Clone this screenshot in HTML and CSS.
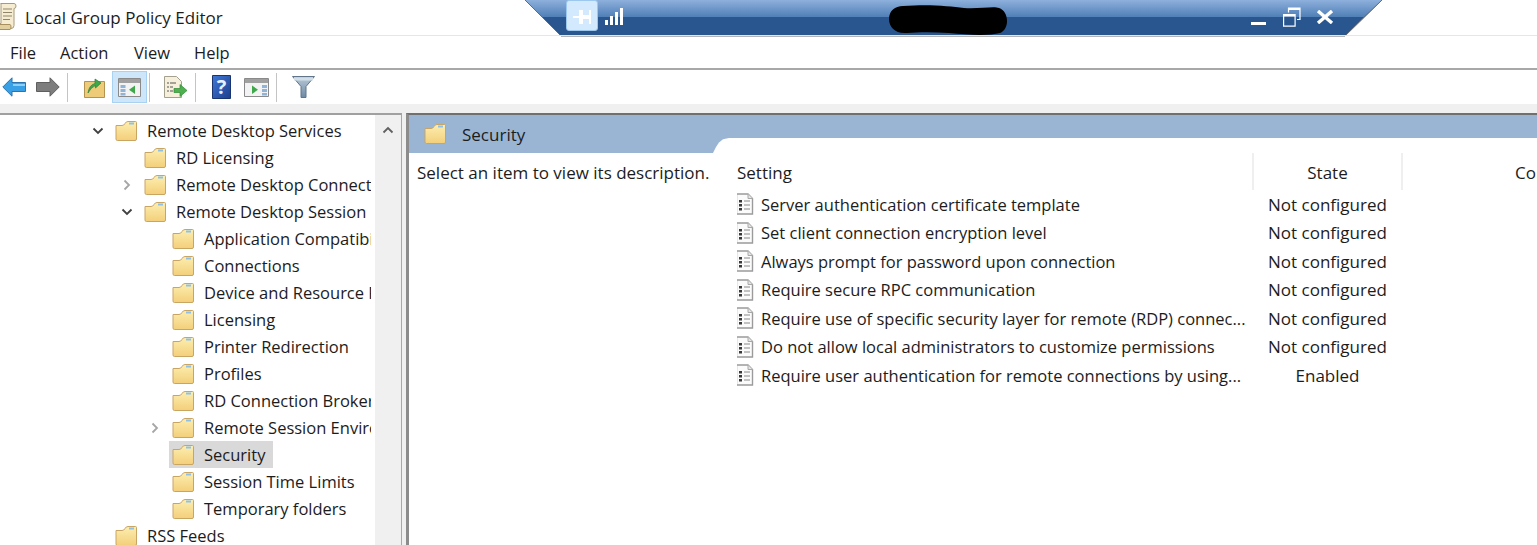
FILE: index.html
```html
<!DOCTYPE html>
<html lang="en">
<head>
    <meta charset="UTF-8">
    <title>Local Group Policy Editor</title>
    <link rel="stylesheet" href="styles.css">
</head>
<body>
    <svg class="defs" width="0" height="0">
        <defs>
            <linearGradient id="folder-fill" x1="0" y1="0" x2="0" y2="1">
                <stop offset="0" stop-color="#fdeeb0"/>
                <stop offset="1" stop-color="#f3cf7a"/>
            </linearGradient>
            <linearGradient id="bar-fill" x1="0" y1="0" x2="0" y2="1">
                <stop offset="0" stop-color="#8eb0dc"/>
                <stop offset="1" stop-color="#4f7fb6"/>
            </linearGradient>
            <linearGradient id="help-fill" x1="0" y1="0" x2="1" y2="1">
                <stop offset="0" stop-color="#3f78d8"/>
                <stop offset="1" stop-color="#1d3f8c"/>
            </linearGradient>
            <linearGradient id="filter-fill" x1="0" y1="0" x2="0" y2="1">
                <stop offset="0" stop-color="#b9cad9"/>
                <stop offset="1" stop-color="#6f8aa3"/>
            </linearGradient>
            <symbol id="folder" viewBox="0 0 22 20">
                <path d="M1 4.500 L1 18 Q1 19.500 2.500 19.500 L20 19.500 Q21.500 19.500 21.500 18 L21.500 1.500 Q21.500 .5 20.500 .5 L13 .5 Q11 .5 10 2.500 Q9 4.500 7 4.500Z" fill="url(#folder-fill)" stroke="#c9a564" stroke-width="1"/>
                <path d="M14 1.500h5v2h-5z" fill="#8fc0e8"/>
            </symbol>
            <symbol id="doc" viewBox="0 0 19 22">
                <path d="M1.500 1h11.500l4.500 4.500v15.500h-16z" fill="#fbfbfb" stroke="#9b9b9b" stroke-width="1.400"/>
                <path d="M13 1v4.500h4.500" fill="#e4e4e4" stroke="#a8a8a8"/>
                <path d="M4 7h3v2.500h-3zM4 11h3v2.500h-3zM4 15h3v2.500h-3z" fill="#3a3a3a"/>
                <path d="M9 8h6M9 12h6M9 16h6" stroke="#8a8a8a" fill="none"/>
            </symbol>
            <symbol id="chev-down" viewBox="0 0 12 8">
                <path d="M1.500 1.500 L6 6 L10.500 1.500" fill="none" stroke="#404040" stroke-width="1.800"/>
            </symbol>
            <symbol id="chev-right" viewBox="0 0 8 12">
                <path d="M1.500 1.500 L6 6 L1.500 10.500" fill="none" stroke="#a6a6a6" stroke-width="1.800"/>
            </symbol>
        </defs>
    </svg>

    <!-- remote desktop connection bar -->
    <div class="rdp-bar">
        <svg class="rdp-shape" width="860" height="38" viewBox="0 0 860 38">
            <path d="M1 0 L37 36 L821 36 L858 0Z" fill="#29568f"/>
            <path d="M1 0 L18 17 L840 17 L858 0Z" fill="url(#bar-fill)"/>
            <path d="M1 0 L37 36 L821 36 L858 0" fill="none" stroke="#6b6b6b" stroke-width="1"/>
        </svg>
        <div class="rdp-pin">
            <svg width="18" height="14" viewBox="0 0 18 14"><path d="M0 6h6v2h-6zM6 0h4v14h-4zM10 5h6v4h-6zM16 0h2v14h-2z" fill="#fff"/></svg>
        </div>
        <svg class="rdp-signal" width="18" height="17" viewBox="0 0 18 17"><path d="M0 12h3v5h-3zM5 8h3v9h-3zM10 4h3v13h-3zM15 0h3v17h-3z" fill="#fff"/></svg>
        <svg class="rdp-blob" width="120" height="30" viewBox="0 0 120 30"><path d="M14 1 C40 -1 60 1 75 3 C90 4 105 1 110 3 C120 6 121 24 111 28 C100 31 80 30 60 28 C45 27 30 27 18 28 C6 29 0 22 0 14 C0 6 6 1 14 1Z" fill="#000"/></svg>
        <div class="rdp-min"></div>
        <svg class="rdp-restore" width="18" height="20" viewBox="0 0 18 20"><path d="M5.500 5.500v-4.500h11.500v11.500h-3" fill="none" stroke="#fff" stroke-width="1.200"/><path d="M5 2h12" stroke="#fff" stroke-width="2"/><path d="M.6 7.600h11.500v11.500h-11.500z" fill="none" stroke="#fff" stroke-width="1.200"/><path d="M1 8.500h11" stroke="#fff" stroke-width="2"/></svg>
        <svg class="rdp-close" width="18" height="14" viewBox="0 0 18 14"><path d="M2 1 L16 13 M16 1 L2 13" stroke="#fff" stroke-width="3.400"/></svg>
    </div>

    <div class="titlebar">
        <svg class="title-icon" width="17" height="28" viewBox="0 0 17 28">
            <path d="M1 1.500h13q2 0 2 2.500t-2 2.500v17q0 3 -3 3h-11v-5h1v-18q0 -2 0 -2.500z" fill="#f5ecd2" stroke="#a99a78"/>
            <path d="M-1 22.500h11q1 0 1 2.500t-1 2.500h-11z" fill="#e2cf9f" stroke="#a98f5c"/>
            <path d="M3 7h9M3 10.500h9M3 14h9M3 17.500h7" stroke="#8f856d"/>
        </svg>
        <span>Local Group Policy Editor</span>
    </div>

    <div class="menubar">
        <span class="menu-file">File</span>
        <span class="menu-action">Action</span>
        <span class="menu-view">View</span>
        <span>Help</span>
    </div>

    <div class="toolbar">
        <svg class="tool-back" width="24" height="20" viewBox="0 0 24 20"><path d="M.8 10 L10 .8 V5.500 H23.500 V14.500 H10 V19.200Z" fill="#39a0e6" stroke="#2b74b0"/><path d="M11 7h12v2h-12z" fill="#8fd0f6"/></svg>
        <svg class="tool-forward" width="24" height="20" viewBox="0 0 24 20"><path d="M23.200 10 L14 .8 V5.500 H.5 V14.500 H14 V19.200Z" fill="#7d7d7d" stroke="#5f5f5f"/></svg>
        <div class="tool-sep"></div>
        <svg class="tool-up" width="21" height="22" viewBox="0 0 21 22"><path d="M.5 5.500h20v16h-20z" fill="#eecb78" stroke="#b4924f"/><path d="M4 17 Q5 9 11 7.500 V3 L17 7 L11.500 12 V9.500 Q7 11 4 17Z" fill="#3fa84a" stroke="#2c7d36" stroke-width=".7"/></svg>
        <div class="tool-active">
            <svg width="23" height="19" viewBox="0 0 23 19"><path d="M.5.5h22v18h-22z" fill="#f3f3f3" stroke="#8a8a8a"/><path d="M1 1h21v4h-21z" fill="#a0a0a0"/><path d="M2.500 7h5v3h-5zM2.500 11h5v3h-5zM2.500 15h5v2.500h-5z" fill="#8fb4d8"/><path d="M17 7.500v8.500l-6 -4.200z" fill="#3fa84a"/></svg>
        </div>
        <div class="tool-sep"></div>
        <svg class="tool-export" width="25" height="22" viewBox="0 0 25 22"><path d="M1.500 .5h12l5 5v16h-17z" fill="#f5efdc" stroke="#a3a08e"/><path d="M4 7h9M4 11h6M4 15h6" stroke="#555" stroke-dasharray="2 1 6 0"/><path d="M11 12.500h6v-4l7 6 -7 6v-4h-6z" fill="#4eb04f" stroke="#2f8a35" stroke-width=".7"/></svg>
        <div class="tool-sep"></div>
        <svg class="tool-help" width="19" height="24" viewBox="0 0 19 24"><path d="M.5.5h18v23h-18z" fill="url(#help-fill)" stroke="#1a3470"/><text x="9.500" y="19" class="help-mark">?</text></svg>
        <svg class="tool-pane" width="25" height="19" viewBox="0 0 25 19"><path d="M.5.5h24v18h-24z" fill="#f3f3f3" stroke="#8a8a8a"/><path d="M1 1h23v4h-23z" fill="#a0a0a0"/><path d="M18 7h5v3h-5zM18 11h5v3h-5zM18 15h5v2.500h-5z" fill="#8fb4d8"/><path d="M8 7.500v8.500l6 -4.200z" fill="#3fa84a"/></svg>
        <div class="tool-sep"></div>
        <svg class="tool-filter" width="23" height="22" viewBox="0 0 23 22"><path d="M.5 .5h22l-8.500 10v11h-5v-11z" fill="url(#filter-fill)" stroke="#60758a"/><path d="M2 1.500h19v3h-19z" fill="#d3dfe8"/></svg>
    </div>

    <div class="main">
        <div class="tree-pane">
            <div class="tree">
                <div class="row l1"><svg class="chev"><use href="#chev-down"/></svg><svg class="folder"><use href="#folder"/></svg><span>Remote Desktop Services</span></div>
                <div class="row l2"><i class="chev"></i><svg class="folder"><use href="#folder"/></svg><span>RD Licensing</span></div>
                <div class="row l2"><svg class="chev-r"><use href="#chev-right"/></svg><svg class="folder"><use href="#folder"/></svg><span>Remote Desktop Connection Host</span></div>
                <div class="row l2"><svg class="chev"><use href="#chev-down"/></svg><svg class="folder"><use href="#folder"/></svg><span>Remote Desktop Session Host</span></div>
                <div class="row l3"><i class="chev"></i><svg class="folder"><use href="#folder"/></svg><span>Application Compatibility</span></div>
                <div class="row l3"><i class="chev"></i><svg class="folder"><use href="#folder"/></svg><span>Connections</span></div>
                <div class="row l3"><i class="chev"></i><svg class="folder"><use href="#folder"/></svg><span>Device and Resource Redirection</span></div>
                <div class="row l3"><i class="chev"></i><svg class="folder"><use href="#folder"/></svg><span>Licensing</span></div>
                <div class="row l3"><i class="chev"></i><svg class="folder"><use href="#folder"/></svg><span>Printer Redirection</span></div>
                <div class="row l3"><i class="chev"></i><svg class="folder"><use href="#folder"/></svg><span>Profiles</span></div>
                <div class="row l3"><i class="chev"></i><svg class="folder"><use href="#folder"/></svg><span>RD Connection Broker</span></div>
                <div class="row l3"><svg class="chev-r"><use href="#chev-right"/></svg><svg class="folder"><use href="#folder"/></svg><span>Remote Session Environment</span></div>
                <div class="row l3 selected"><i class="chev"></i><svg class="folder"><use href="#folder"/></svg><span>Security</span></div>
                <div class="row l3"><i class="chev"></i><svg class="folder"><use href="#folder"/></svg><span>Session Time Limits</span></div>
                <div class="row l3"><i class="chev"></i><svg class="folder"><use href="#folder"/></svg><span>Temporary folders</span></div>
                <div class="row l1"><i class="chev"></i><svg class="folder"><use href="#folder"/></svg><span>RSS Feeds</span></div>
            </div>
            <div class="scrollbar">
                <svg width="12" height="8" viewBox="0 0 12 8"><path d="M1.500 6.500 L6 2 L10.500 6.500" fill="none" stroke="#606060" stroke-width="1.800"/></svg>
            </div>
        </div>

        <div class="content-pane">
            <div class="pane-head">
                <svg class="folder"><use href="#folder"/></svg>
                <span>Security</span>
                <div class="head-notch"></div>
            </div>
            <div class="pane-body">
                <div class="description">Select an item to view its description.</div>
                <div class="list">
                    <div class="list-head">
                        <div class="col-setting">Setting</div>
                        <div class="col-state">State</div>
                        <div class="col-comment">Comment</div>
                    </div>
                    <div class="list-row"><svg class="doc"><use href="#doc"/></svg><div class="col-name">Server authentication certificate template</div><div class="col-value">Not configured</div></div>
                    <div class="list-row"><svg class="doc"><use href="#doc"/></svg><div class="col-name">Set client connection encryption level</div><div class="col-value">Not configured</div></div>
                    <div class="list-row"><svg class="doc"><use href="#doc"/></svg><div class="col-name">Always prompt for password upon connection</div><div class="col-value">Not configured</div></div>
                    <div class="list-row"><svg class="doc"><use href="#doc"/></svg><div class="col-name">Require secure RPC communication</div><div class="col-value">Not configured</div></div>
                    <div class="list-row"><svg class="doc"><use href="#doc"/></svg><div class="col-name">Require use of specific security layer for remote (RDP) connec...</div><div class="col-value">Not configured</div></div>
                    <div class="list-row"><svg class="doc"><use href="#doc"/></svg><div class="col-name">Do not allow local administrators to customize permissions</div><div class="col-value">Not configured</div></div>
                    <div class="list-row"><svg class="doc"><use href="#doc"/></svg><div class="col-name">Require user authentication for remote connections by using...</div><div class="col-value">Enabled</div></div>
                </div>
            </div>
        </div>
    </div>
</body>
</html>
```

FILE: styles.css
```css
html, body {
    height: 100%;
}

body {
    margin: 0;
    background: #fff;
    color: #1c1c1c;
    font-family: "Open Sans", "Noto Sans", sans-serif;
    font-size: 17px;
    overflow: hidden;
    display: flex;
    flex-direction: column;
}

.defs {
    position: absolute;
}

/* connection bar sits over the window */
.rdp-bar {
    position: absolute;
    left: 524px;
    top: 0;
    width: 860px;
    height: 38px;
}

.rdp-shape {
    position: absolute;
    left: 0;
    top: 0;
}

.rdp-pin {
    position: absolute;
    left: 42px;
    top: 0;
    width: 32px;
    height: 31px;
    padding-top: 3px;
    background: #d3e9fd;
    border: 1px solid #9cc7ee;
    border-radius: 3px;
    box-sizing: border-box;
    display: flex;
    align-items: center;
    justify-content: center;
}

.rdp-signal {
    position: absolute;
    left: 81px;
    top: 8px;
}

.rdp-blob {
    position: absolute;
    left: 365px;
    top: 5px;
}

.rdp-min {
    position: absolute;
    left: 727px;
    top: 22px;
    width: 15px;
    height: 3px;
    background: #fff;
}

.rdp-restore {
    position: absolute;
    left: 759px;
    top: 7px;
}

.rdp-close {
    position: absolute;
    left: 792px;
    top: 10px;
}

.titlebar {
    height: 35px;
    flex: none;
    border-bottom: 1px solid #e6e6e6;
    display: flex;
    align-items: center;
    padding-left: 25px;
    position: relative;
}

.title-icon {
    position: absolute;
    left: 0;
    top: 2px;
}

.menubar {
    height: 32px;
    flex: none;
    border-bottom: 2px solid #a8a8a8;
    display: flex;
    align-items: center;
    padding-left: 10px;
    font-size: 16.5px;
}

.menu-file {
    width: 50px;
}

.menu-action {
    width: 74px;
}

.menu-view {
    width: 60px;
}

.toolbar {
    height: 34px;
    flex: none;
    display: flex;
    align-items: center;
    padding-left: 2px;
}

.tool-sep {
    width: 1px;
    height: 29px;
    background: #c4c4c4;
}

.tool-forward {
    margin-left: 10px;
    margin-right: 7px;
}

.tool-up {
    margin-left: 16px;
}

.tool-active {
    width: 35px;
    height: 32px;
    margin-left: 7px;
    margin-right: 2px;
    box-sizing: border-box;
    background: #cde6f9;
    border: 1px solid #a9d2f2;
    display: flex;
    align-items: center;
    justify-content: center;
}

.tool-export {
    margin-left: 13px;
    margin-right: 7px;
}

.tool-help {
    margin-left: 16px;
    overflow: visible;
}

.tool-pane {
    margin-left: 13px;
    margin-right: 7px;
}

.tool-filter {
    margin-left: 15px;
}

.help-mark {
    fill: #e8f0ff;
    font-size: 20px;
    font-weight: 700;
    text-anchor: middle;
}

.main {
    flex: 1;
    display: flex;
    min-height: 0;
    background: #f0f0f0;
    padding-top: 9px;
}

.tree-pane {
    width: 402px;
    flex: none;
    display: flex;
    justify-content: space-between;
    overflow: hidden;
    background: #fff;
    border-top: 2px solid #a0a0a0;
    border-right: 1px solid #a8a8a8;
    box-sizing: border-box;
}

.tree {
    width: 371px;
    flex: none;
    padding-top: 2px;
    overflow: hidden;
    font-size: 16.5px;
}

.row {
    height: 27px;
    display: flex;
    align-items: center;
    white-space: nowrap;
}

.l1 {
    padding-left: 92px;
}

.l2 {
    padding-left: 121px;
}

.l3 {
    padding-left: 149px;
}

.chev,
.chev-r {
    width: 12px;
    height: 8px;
    flex: none;
    margin-right: 11px;
}

.chev-r {
    height: 12px;
}

.folder {
    width: 22px;
    height: 20px;
    flex: none;
}

.row .folder {
    margin-right: 10px;
}

.selected span {
    background: #d9d9d9;
    line-height: 27px;
    padding-right: 8px;
    margin-left: -35px;
    padding-left: 35px;
}

.selected .folder {
    position: relative;
    z-index: 1;
}

.scrollbar {
    width: 26px;
    flex: none;
    background: #f0f0f0;
    display: flex;
    justify-content: center;
    align-items: flex-start;
    padding-top: 11px;
    box-sizing: border-box;
}

.content-pane {
    flex: 1;
    min-width: 0;
    margin-left: 4px;
    display: flex;
    flex-direction: column;
    background: #fff;
    border-top: 2px solid #707070;
    border-left: 3px solid #8c8c8c;
}

.pane-head {
    height: 38px;
    flex: none;
    background: #9ab5d3;
    display: flex;
    align-items: center;
    padding-left: 15px;
    position: relative;
}

.pane-head span {
    margin-left: 16px;
}

.head-notch {
    position: absolute;
    left: 304px;
    right: 0;
    bottom: 0;
    height: 15px;
    background: #fff;
    clip-path: polygon(0 100%, 3px 60%, 6px 30%, 10px 8%, 16px 0, 100% 0, 100% 100%);
}

.pane-body {
    display: flex;
}

.description {
    width: 328px;
    flex: none;
    padding: 8px 0 0 8px;
    box-sizing: border-box;
    white-space: nowrap;
}

.list {
    flex: 1;
    min-width: 0;
    overflow: hidden;
}

.list-head {
    height: 37px;
    display: flex;
}

.col-setting {
    width: 517px;
    flex: none;
    line-height: 40px;
    border-right: 2px solid #efefef;
    box-sizing: border-box;
}

.col-state {
    width: 149px;
    flex: none;
    line-height: 40px;
    text-align: center;
    border-right: 2px solid #efefef;
    box-sizing: border-box;
}

.col-comment {
    padding-left: 112px;
    line-height: 40px;
    white-space: nowrap;
}

.list-row {
    height: 28.5px;
    display: flex;
    align-items: center;
}

.doc {
    width: 19px;
    height: 22px;
    flex: none;
    margin-left: -2px;
    margin-right: 7px;
}

.col-name {
    width: 507px;
    flex: none;
    font-size: 16.5px;
    white-space: nowrap;
}

.col-value {
    width: 119px;
    flex: none;
    text-align: center;
    white-space: nowrap;
}
```
